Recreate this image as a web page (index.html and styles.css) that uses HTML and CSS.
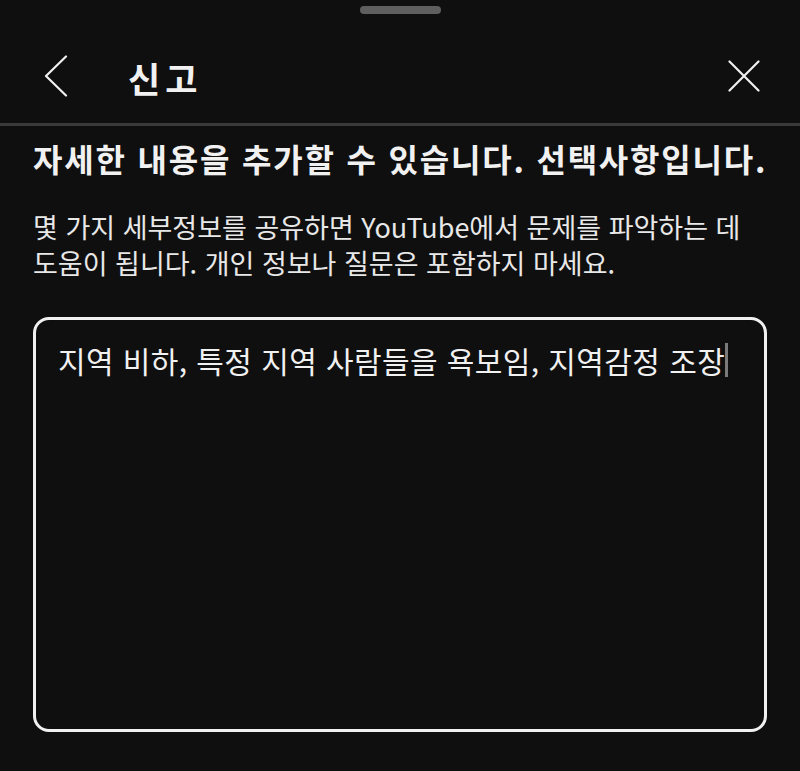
FILE: index.html
```html
<!DOCTYPE html>
<html lang="ko">
<head>
<meta charset="utf-8">
<title>신고</title>
<link rel="stylesheet" href="styles.css">
</head>
<body>
<div class="sheet">
  <div class="handle"></div>
  <header class="header">
    <button class="icon-btn back" aria-label="뒤로">
      <svg width="24" height="42" viewBox="0 0 24 42" fill="none" stroke="#f1f1f1" stroke-width="2.2" stroke-linecap="round" stroke-linejoin="round">
        <path d="M22 1.5 L2 21 L22 40.5"/>
      </svg>
    </button>
    <h1 class="title">신고</h1>
    <button class="icon-btn close" aria-label="닫기">
      <svg width="32" height="32" viewBox="0 0 32 32" fill="none" stroke="#f1f1f1" stroke-width="2.2" stroke-linecap="round">
        <path d="M1.5 1.5 L30.5 30.5 M30.5 1.5 L1.5 30.5"/>
      </svg>
    </button>
  </header>
  <main class="content">
    <h2 class="heading">자세한 내용을 추가할 수 있습니다. 선택사항입니다.</h2>
    <p class="desc">몇 가지 세부정보를 공유하면 YouTube에서 문제를 파악하는 데 도움이 됩니다. 개인 정보나 질문은 포함하지 마세요.</p>
    <div class="textbox" role="textbox" aria-multiline="true">지역 비하, 특정 지역 사람들을 욕보임, 지역감정 조장<span class="caret"></span></div>
  </main>
</div>
</body>
</html>
```

FILE: styles.css
```css
* { box-sizing: border-box; }
html, body {
  margin: 0;
  padding: 0;
  background: #0f0f0f;
}
body {
  font-family: "Noto Sans CJK KR", "Noto Sans", sans-serif;
  color: #f1f1f1;
  width: 800px;
  height: 771px;
  overflow: hidden;
}
.sheet {
  padding-top: 6px;
}
.handle {
  width: 81px;
  height: 8px;
  border-radius: 4px;
  background: #5f5f5f;
  margin: 0 auto;
}
.header {
  margin-top: 14px;
  height: 98px;
  border-bottom: 3px solid #3a3a3a;
  display: flex;
  align-items: center;
  padding: 0 40px 0 44px;
}
.icon-btn {
  background: none;
  border: 0;
  padding: 0;
  display: flex;
  align-items: center;
  justify-content: center;
}
.back svg { display: block; }
.title {
  margin: 0 0 0 60px;
  font-size: 35px;
  font-weight: 700;
  line-height: 40px;
  letter-spacing: 5px;
  flex: 1;
  position: relative;
  top: 2px;
}
.close svg { display: block; }
.content {
  padding: 12px 33px 0 33px;
}
.heading {
  margin: 0;
  font-size: 32px;
  font-weight: 700;
  line-height: 40px;
  letter-spacing: 1.8px;
  white-space: nowrap;
}
.desc {
  margin: 31px 0 0 0;
  font-size: 27px;
  line-height: 36px;
  color: #e8e8e8;
  padding-right: 14px;
}
.textbox {
  margin-top: 36px;
  height: 415px;
  border: 3px solid #f1f1f1;
  border-radius: 16px;
  padding: 20px 22px;
  font-size: 30px;
  line-height: 40px;
  letter-spacing: 0.4px;
  color: #f1f1f1;
}
.caret {
  display: inline-block;
  width: 3px;
  height: 34px;
  background: #7a7a7a;
  vertical-align: -4px;
  margin-left: 0;
}
```
